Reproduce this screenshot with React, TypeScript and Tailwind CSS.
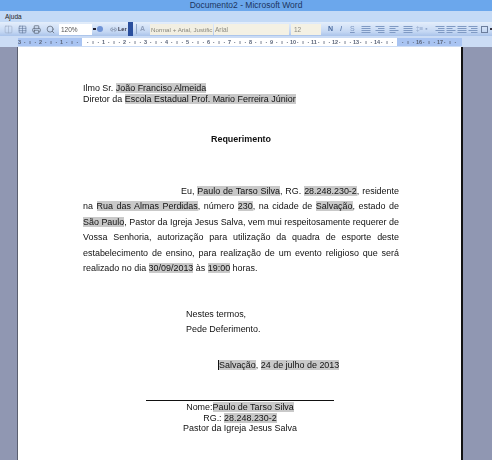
import React from "react";
import { Printer, Search, Pilcrow, Table, Columns2, Link2 } from "lucide-react";

const H = ({ children }: { children: React.ReactNode }) => <span className="bg-[#c9c9c9]">{children}</span>;

const Lines = ({ n }: { n: number }) => (
  <svg width="10" height="9" viewBox="0 0 10 9" className="shrink-0">
    {[1.5, 3.5, 5.5, 7.5].map((y, i) => (
      <line key={y} x1={n === 1 && i % 2 ? 3 : 0.5} x2={n === 2 && i % 2 ? 6.5 : 9.5} y1={y} y2={y} stroke="#7f9ac4" strokeWidth="1" />
    ))}
  </svg>
);

const rulerCells = Array.from({ length: 84 }, (_, i) => {
  const d = i - 12;
  if (i === 0) return "3";
  if (i === 4) return "2";
  if (i === 8) return "1";
  if (d === 0 || d === 60) return "";
  if (d > 0 && d % 4 === 0) return String(d / 4);
  return i % 2 === 0 ? "ı" : "·";
});

export default function App() {
  return (
    <div className="w-[492px] h-[460px] overflow-hidden flex flex-col bg-white font-['Liberation_Sans',Arial,sans-serif] text-[#111]">
      <div className="h-[11px] shrink-0 bg-[#6ba7ec] text-center text-[8.5px] leading-[11px] text-[#1c3560]">Documento2 - Microsoft Word</div>

      <div className="h-[11px] shrink-0 bg-[#c4daf6] pl-[5px] text-[6.5px] leading-[12px] text-[#222]">Ajuda</div>

      <div className="h-[14px] shrink-0 bg-[linear-gradient(#e4eefb,#c4d7f3_70%,#a9c3ea)] flex items-center text-[6.5px] blur-[0.3px]">
        <div className="flex items-center gap-[5px] pl-[4px] w-[59px] text-[#5a6f92]">
          <Columns2 size={9} strokeWidth={1.5} className="text-[#9aa9c2] shrink-0" />
          <Table size={9} strokeWidth={1.5} className="shrink-0" />
          <Printer size={9} strokeWidth={2} className="text-[#5b6676] shrink-0" />
          <Search size={9} strokeWidth={2} className="text-[#5b6676] shrink-0" />
          <Pilcrow size={8} strokeWidth={3} className="text-[#333] shrink-0" />
        </div>
        <div className="w-[33px] h-[11px] shrink-0 bg-white pl-[2px] leading-[11px] text-[#555]">120%</div>
        <div className="w-[5px] h-[11px] flex items-center justify-center shrink-0">
          <div className="w-[3px] h-[2px] bg-[#223]" />
        </div>
        <div className="w-[6px] h-[6px] rounded-full bg-[#6f93d6] mr-[7px] shrink-0" />
        <Link2 size={7} className="text-[#6a7890] mr-[1px] shrink-0" />
        <span className="w-[7px] text-[#334] font-bold mr-[3px] text-[5.5px] whitespace-nowrap">Ler</span>
        <div className="w-[5px] h-[14px] bg-[#2a4f9e] mr-[3px] shrink-0" />
        <div className="w-[1px] h-[10px] bg-[#8fa6c8] mr-[3px] shrink-0" />
        <span className="w-[5px] text-[#90a0bc] mr-[5px] text-[7px] font-bold">A</span>
        <div className="w-[63px] h-[11px] shrink-0 bg-[#f2efe2] pl-[1px] text-[6.2px] leading-[11px] text-[#88877c] whitespace-nowrap mr-[1px]">Normal + Arial, Justific</div>
        <div className="w-[75px] h-[11px] shrink-0 bg-[#f4f1e4] pl-[1px] leading-[11px] text-[#8b8a80] mr-[2px]">Arial</div>
        <div className="w-[30px] h-[11px] shrink-0 bg-[#f4f1e4] pl-[3px] leading-[11px] text-[#8b8a80] mr-[7px]">12</div>
        <div className="flex items-center text-[#47689d]">
          <span className="font-bold text-[7px] w-[12px] shrink-0">N</span>
          <span className="italic text-[7px] w-[10px] shrink-0">I</span>
          <span className="underline text-[7px] w-[11px] shrink-0 text-[#7d96c0]">S</span>
          <div className="flex gap-[4px] items-center">
            <Lines n={0} />
            <Lines n={1} />
            <Lines n={2} />
            <Lines n={0} />
          </div>
          <span className="w-[22px] pl-[3px] text-[#8ea4c8] shrink-0">‡≡ ▪</span>
          <div className="flex gap-[1px] items-center">
            <Lines n={1} />
            <Lines n={2} />
          </div>
          <div className="flex gap-[1px] items-center ml-[1px]">
            <Lines n={0} />
            <Lines n={1} />
          </div>
          <div className="w-[7px] h-[7px] border border-[#6b7d9c] ml-[3px] shrink-0" />
          <div className="w-[2px] h-[2px] bg-[#334] ml-[2px] shrink-0" />
        </div>
      </div>

      <div className="h-[11px] shrink-0 bg-[#cbdcf5] pt-[2px] blur-[0.25px]">
        <div className="h-[8px] ml-[18px] w-[444px] flex bg-[linear-gradient(90deg,#a9c4f2_64px,#ffffff_64px,#ffffff_379px,#a9c4f2_379px)]">
          <div className="flex -ml-[1px] shrink-0">
            {rulerCells.map((c, i) => (
              <span key={i} className="w-[5.25px] text-center text-[5.5px] leading-[8px] font-bold text-[#5a6478]">{c}</span>
            ))}
          </div>
        </div>
      </div>

      <div className="flex-1 flex min-h-0">
        <div className="w-[18px] bg-[#9097b2] border-r border-[#5a5f70]" />
        <div className="w-[445px] border-r-2 border-[#111] bg-white pl-[65px] text-[8.95px] leading-[10.5px] blur-[0.2px]">
          <p className="mt-[36px] whitespace-nowrap">Ilmo Sr. <H>João Franciso Almeida</H></p>
          <p className="whitespace-nowrap">Diretor da <H>Escola Estadual Prof. Mario Ferreira Júnior</H></p>
          <p className="mt-[30px] w-[316px] text-center font-bold">Requerimento</p>

          <div className="mt-[39.5px] w-[316px] leading-[15.4px]">
            <p className="[text-align-last:justify] pl-[98px]">Eu, <H>Paulo de Tarso Silva</H>, RG. <H>28.248.230-2</H>, residente</p>
            <p className="[text-align-last:justify]">na <H>Rua das Almas Perdidas</H>, número <H>230</H>, na cidade de <H>Salvação</H>, estado de</p>
            <p className="[text-align-last:justify]"><H>São Paulo</H>, Pastor da Igreja Jesus Salva, vem mui respeitosamente requerer de</p>
            <p className="[text-align-last:justify]">Vossa Senhoria, autorização para utilização da quadra de esporte deste</p>
            <p className="[text-align-last:justify]">estabelecimento de ensino, para realização de um evento religioso que será</p>
            <p>realizado no dia <H>30/09/2013</H> às <H>19:00</H> horas.</p>
          </div>

          <div className="mt-[31px] pl-[103px] leading-[15px]">
            <p>Nestes termos,</p>
            <p>Pede Deferimento.</p>
          </div>

          <p className="mt-[21px] pl-[135px] leading-[15px] whitespace-nowrap">
            <span className="border-l border-[#111]"><H>Salvação</H></span>, <H>24 de julho de 2013</H>
          </p>

          <div className="mt-[27px] ml-[63px] w-[188px] border-t border-[#111] pt-[1px] text-center">
            <p>Nome:<H>Paulo de Tarso Silva</H></p>
            <p>RG.: <H>28.248.230-2</H></p>
            <p>Pastor da Igreja Jesus Salva</p>
          </div>
        </div>
        <div className="flex-1 bg-[#9097b2]" />
      </div>
    </div>
  );
}
